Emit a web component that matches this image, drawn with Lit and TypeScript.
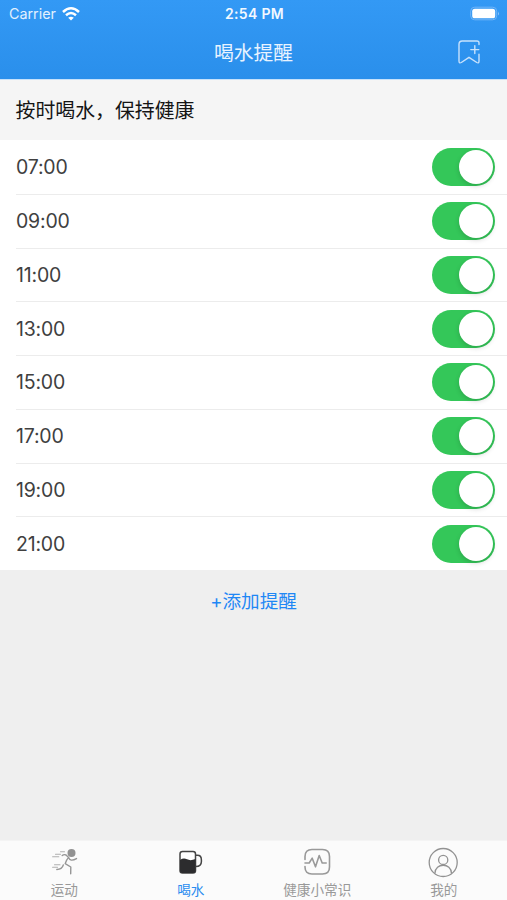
import { LitElement, html, css, svg } from "lit";
import { customElement, property, state } from "lit/decorators.js";
import { classMap } from "lit/directives/class-map.js";

@customElement("toggle-switch")
class ToggleSwitch extends LitElement {
  @property({ type: Boolean }) on = true;

  static styles = css`
    :host { display: block; }
    .track {
      box-sizing: border-box;
      width: 63px;
      height: 38px;
      padding: 2px;
      border-radius: 19px;
      background: #e5e5e8;
      display: flex;
      align-items: center;
    }
    .track.on { background: #34c759; justify-content: flex-end; }
    .thumb {
      width: 34px;
      height: 34px;
      border-radius: 50%;
      background: #fff;
      box-shadow: 0 2px 5px rgba(0, 0, 0, 0.16);
    }
  `;

  render() {
    return html`<div class=${classMap({ track: true, on: this.on })} role="switch" aria-checked=${this.on}>
      <div class="thumb"></div>
    </div>`;
  }
}

const icons = {
  run: svg`
    <circle cx="21.5" cy="5" r="4" fill="#929292"/>
    <path d="M12.2 7.6 Q14 6 16 7 L18.6 9.4 Q16.2 12 15.2 15.6 L20.8 19 L20.7 25.8 M18.6 9.4 Q20 14.2 26.5 10.6 M13.3 17 Q12 21.3 6.8 21.5"
      fill="none" stroke="#969696" stroke-width="1.4" stroke-linecap="round" stroke-linejoin="round"/>
    <path d="M5.5 6.2 H10.5 M10.5 3.8 H14.5 M2.6 8.8 H8.8 M4.5 16.8 H10 M2.6 19.3 H7.5"
      fill="none" stroke="#b0b0b0" stroke-width="1.1" stroke-linecap="round"/>`,
  cup: svg`
    <rect x="4" y="3.5" width="15.5" height="21.5" rx="2.5" fill="#fff" stroke="#444" stroke-width="1.5"/>
    <path d="M4 12 Q7.5 9.5 11 11.3 T19.5 11 V22.5 Q19.5 25 17 25 H6.5 Q4 25 4 22.5Z" fill="#2c2c2e"/>
    <path d="M19.8 7.3 H21.5 Q25.4 7.3 25.4 12 V13.5 Q25.4 18.5 19.8 18.5" fill="none" stroke="#444" stroke-width="1.5"/>`,
  pulse: svg`
    <path d="M2 11.5 V8.5 Q2 1.5 9 1.5 H19.5 Q26.5 1.5 26.5 8.5 V19 Q26.5 26 19.5 26 H9 Q2 26 2 19 V18.5 M2 15 H6.2 L9.2 10.2 L12.5 18.8 L16.2 7.5 L19.2 15 H23.2"
      fill="none" stroke="#999" stroke-width="1.6" stroke-linecap="round" stroke-linejoin="round"/>`,
  person: svg`
    <circle cx="14.2" cy="14.5" r="14" fill="none" stroke="#929292" stroke-width="1.3"/>
    <circle cx="14.2" cy="11.9" r="4.6" fill="none" stroke="#929292" stroke-width="1.3"/>
    <path d="M5.9 25.4 C6.1 14.5 22.3 14.5 22.5 25.4" fill="none" stroke="#929292" stroke-width="1.3"/>`,
};

@customElement("app-root")
class AppRoot extends LitElement {
  @state() private times = ["07:00", "09:00", "11:00", "13:00", "15:00", "17:00", "19:00", "21:00"];
  @state() private active = "喝水";

  private tabs = [
    { label: "运动", icon: icons.run },
    { label: "喝水", icon: icons.cup },
    { label: "健康小常识", icon: icons.pulse },
    { label: "我的", icon: icons.person },
  ];

  static styles = css`
    :host {
      display: flex;
      flex-direction: column;
      height: 900px;
      width: 507px;
      overflow: hidden;
      background: #efefef;
      font-family: Inter, "Noto Sans CJK SC", sans-serif;
    }
    svg { display: block; overflow: visible; }
    .header {
      flex: none;
      height: 80px;
      box-sizing: border-box;
      background: linear-gradient(#3399f5, #2a8feb);
      border-bottom: 1px solid #c6e2fb;
      color: #fff;
    }
    .status, .nav {
      display: grid;
      grid-template-columns: 1fr auto 1fr;
      align-items: center;
    }
    .status { height: 27px; padding: 0 7px 0 9px; }
    .carrier { display: flex; align-items: center; gap: 6px; font-size: 14.3px; color: #e2f0fe; }
    .clock { font-size: 14px; font-weight: 600; letter-spacing: 0.35px; color: #f2f8ff; }
    .battery { justify-self: end; }
    .nav { height: 50px; padding: 0 27px; }
    .title { grid-column: 2; font-size: 19.8px; line-height: 28px; padding-top: 2px; color: #e8f3ff; }
    .bookmark { justify-self: end; }
    .caption {
      flex: none;
      height: 60px;
      box-sizing: border-box;
      padding: 0 0 1px 15.5px;
      display: flex;
      align-items: center;
      background: #f5f5f5;
      font-size: 19.9px;
      color: #141414;
    }
    .list { flex: none; background: #fff; }
    .row {
      height: 53.75px;
      margin-left: 16px;
      padding-right: 12px;
      box-sizing: border-box;
      display: flex;
      align-items: center;
      justify-content: space-between;
      border-top: 1px solid #ececec;
    }
    .row:first-child { border-top-color: transparent; }
    .time { font-size: 19.5px; letter-spacing: -0.2px; color: #404040; }
    .add { flex: 1; padding-top: 17px; text-align: center; font-size: 18.6px; line-height: 28px; color: #1f87f5; }
    .tabs {
      flex: none;
      height: 60px;
      box-sizing: border-box;
      display: grid;
      grid-template-columns: repeat(4, 1fr);
      padding-left: 1px;
      background: #fbfbfb;
      border-top: 1px solid #f4f4f4;
    }
    .tab {
      display: flex;
      flex-direction: column;
      align-items: center;
      padding-top: 7px;
      gap: 4px;
      font-size: 13.6px;
      line-height: 20px;
      color: #999;
    }
    .tab.active { color: #2b8df0; }
  `;

  render() {
    return html`
      <div class="header">
        <div class="status">
          <div class="carrier">
            <span>Carrier</span>
            <svg width="18" height="14" viewBox="0 0 18 14" fill="none" stroke="#fff" stroke-width="2.5">
              <path d="M1 5 Q9 -2.4 17 5"/>
              <path d="M4 8.2 Q9 3.8 14 8.2"/>
              <path d="M9 13.6 L6.2 10.7 Q9 8.6 11.8 10.7Z" fill="#fff" stroke="none"/>
            </svg>
          </div>
          <div class="clock">2:54 PM</div>
          <svg class="battery" width="30" height="14" viewBox="0 0 30 14">
            <rect x="0.7" y="0.2" width="26" height="12.6" rx="4" fill="none" stroke="#72b5f7"/>
            <rect x="2.2" y="1.7" width="23" height="9.6" rx="2.6" fill="#fff"/>
            <path d="M28 4.5 Q29.8 6.5 28 8.5Z" fill="#8fc5fa"/>
          </svg>
        </div>
        <div class="nav">
          <div class="title">喝水提醒</div>
          <svg class="bookmark" width="22" height="24" viewBox="0 0 22 24" fill="none" stroke="#c8e2fc" stroke-width="1.4" stroke-linecap="round" stroke-linejoin="round">
            <path d="M21 4.5 V3 Q21 1 19 1 H4.2 Q1 1 1 4.2 V21 Q1 23.7 3.3 22.5 L11 17.3 L18.8 22.5 Q21 23.7 21 21 V14.3"/>
            <path d="M12.8 9.6 H20.8 M16.8 5.6 V13.6"/>
          </svg>
        </div>
      </div>
      <div class="caption">按时喝水，保持健康</div>
      <div class="list">
        ${this.times.map((t) => html`<div class="row"><span class="time">${t}</span><toggle-switch></toggle-switch></div>`)}
      </div>
      <div class="add">+添加提醒</div>
      <div class="tabs">
        ${this.tabs.map(
          (t) => html`<div class=${classMap({ tab: true, active: t.label === this.active })}>
            <svg width="29" height="28" viewBox="0 0 29 28">${t.icon}</svg>
            <span>${t.label}</span>
          </div>`,
        )}
      </div>
    `;
  }
}
